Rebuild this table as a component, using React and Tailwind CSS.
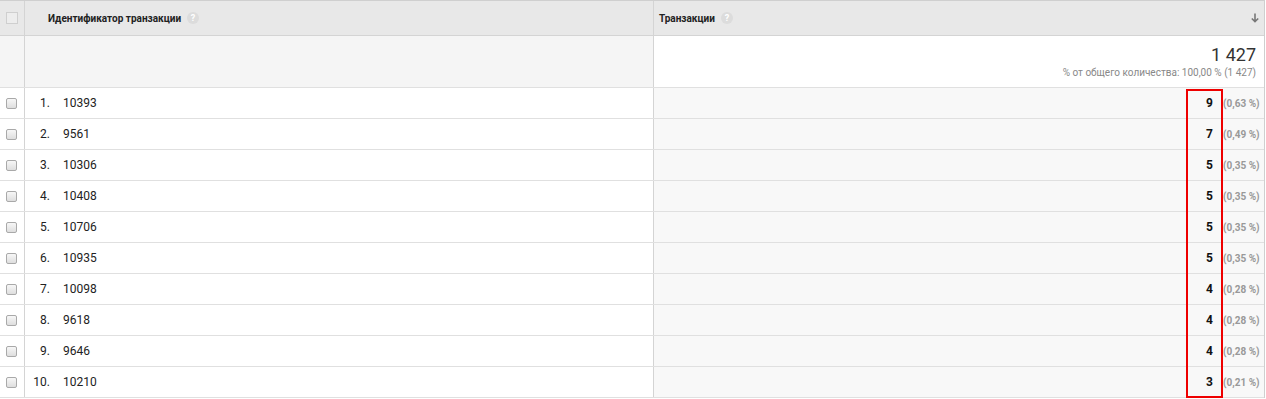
import React from 'react';

const rows = [
  { n: 1, id: '10393', v: 9, p: '0,63 %' },
  { n: 2, id: '9561', v: 7, p: '0,49 %' },
  { n: 3, id: '10306', v: 5, p: '0,35 %' },
  { n: 4, id: '10408', v: 5, p: '0,35 %' },
  { n: 5, id: '10706', v: 5, p: '0,35 %' },
  { n: 6, id: '10935', v: 5, p: '0,35 %' },
  { n: 7, id: '10098', v: 4, p: '0,28 %' },
  { n: 8, id: '9618', v: 4, p: '0,28 %' },
  { n: 9, id: '9646', v: 4, p: '0,28 %' },
  { n: 10, id: '10210', v: 3, p: '0,21 %' },
];

const Help = () => (
  <span className="ml-[6px] inline-flex h-[12px] w-[12px] items-center justify-center rounded-full bg-[#dcdcdc] text-[9px] font-bold leading-none text-white">
    ?
  </span>
);

const Checkbox = () => (
  <span className="block h-[11px] w-[11px] rounded-[2px] border border-[#a9a9a9] bg-gradient-to-b from-[#f7f7f7] to-[#dedede]" />
);

const App = () => {
  return (
    <div className="relative w-[1266px] bg-white text-[#222] font-['Roboto','Liberation_Sans',Arial,sans-serif]">
      <div className="w-[1265px] border-t border-r border-[#cfcfcf]">
        {/* header */}
        <div className="flex h-[35px] border-b border-[#d4d4d4] bg-[#e8e8e8]">
          <div className="flex w-[25px] shrink-0 items-center justify-center border-r border-[#d4d4d4]">
            <span className="block h-[12px] w-[12px] border border-[#cfcfcf] bg-[#ededed]" />
          </div>
          <div className="flex w-[629px] shrink-0 items-center border-r border-[#d4d4d4] pl-[23px] text-[10px] font-bold">
            Идентификатор транзакции
            <Help />
          </div>
          <div className="flex flex-1 items-center pl-[5px] pr-[3px] text-[10px] font-bold">
            Транзакции
            <Help />
            <svg className="ml-auto" width="12" height="12" viewBox="0 0 12 12" fill="none" stroke="#777" strokeWidth="1.6">
              <path d="M6 1.5v8M2.8 6.5 6 9.6l3.2-3.1" />
            </svg>
          </div>
        </div>

        {/* summary */}
        <div className="flex h-[52px] border-b border-[#e0e0e0]">
          <div className="w-[25px] shrink-0 border-r border-[#d4d4d4] bg-[#f5f5f5]" />
          <div className="w-[629px] shrink-0 border-r border-[#d4d4d4] bg-[#f5f5f5]" />
          <div className="flex flex-1 flex-col items-end pr-[8px] pt-[8px]">
            <div className="text-[18px] leading-[22px] text-[#333]">1 427</div>
            <div className="mt-[1px] text-[10px] leading-[12px] text-[#888]">
              % от общего количества: 100,00 % (1 427)
            </div>
          </div>
        </div>

        {/* rows */}
        {rows.map((r) => (
          <div key={r.n} className="flex h-[31px] border-b border-[#e0e0e0] text-[12px]">
            <div className="flex w-[25px] shrink-0 items-center justify-center border-r border-[#d4d4d4] pr-[2px]">
              <Checkbox />
            </div>
            <div className="flex w-[629px] shrink-0 items-center border-r border-[#d4d4d4]">
              <span className="w-[25px] text-right">{r.n}.</span>
              <span className="ml-[13px]">{r.id}</span>
            </div>
            <div className="flex flex-1 items-center justify-end bg-[#f8f8f8] pr-[6px]">
              <span className="font-bold text-[12px] text-[#111]">{r.v}</span>
              <span className="ml-[10px] w-[35px] whitespace-nowrap text-[10px] font-bold text-[#999]">({r.p})</span>
            </div>
          </div>
        ))}
      </div>

      {/* red highlight */}
      <div className="pointer-events-none absolute left-[1186px] top-[89px] h-[309px] w-[37px] border-2 border-[#ee0000]" />
    </div>
  );
};

export default App;
